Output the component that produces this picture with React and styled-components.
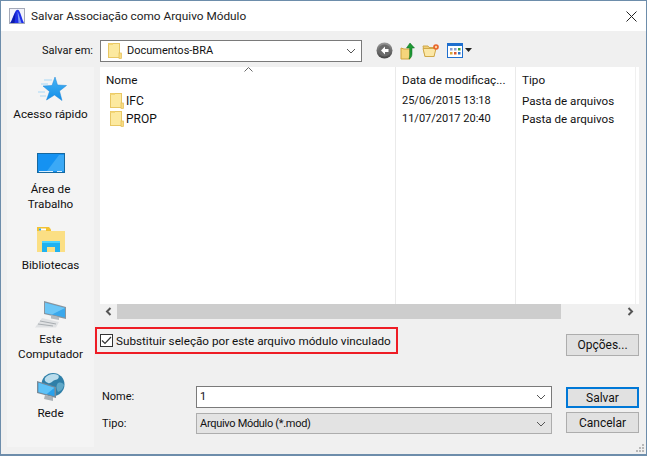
import styled, { createGlobalStyle } from 'styled-components';

const Global = createGlobalStyle`
  html, body { margin: 0; padding: 0; background: #f0f0f0; }
  body {
    font-family: Roboto, 'Noto Sans', sans-serif;
    font-size: 12px;
    color: #111;
  }
  * { box-sizing: border-box; }
`;

const Dialog = styled.div`
  width: 647px;
  height: 456px;
  display: flex;
  flex-direction: column;
  border: 1px solid #6d8dab;
  border-bottom-width: 2px;
  background: #f0f0f0;
  position: relative;
`;

const TitleBar = styled.div`
  height: 30px;
  flex: none;
  background: #fff;
  display: flex;
  align-items: center;
  gap: 6px;
  padding: 0 8px;
  font-size: 11.8px;
  color: #222;
`;

const CloseButton = styled.div`
  margin-left: auto;
  margin-right: 1px;
  display: flex;
`;

const TopRow = styled.div`
  height: 36px;
  flex: none;
  display: flex;
  align-items: center;
  padding-top: 3px;
`;

const SaveLabel = styled.div`
  width: 92px;
  text-align: right;
  margin-right: 7px;
  padding-bottom: 1px;
  font-size: 11px;
`;

const Combo = styled.div`
  height: ${(p) => p.$h || 22}px;
  width: ${(p) => p.$w}px;
  display: flex;
  align-items: center;
  border: 1px solid ${(p) => (p.$muted ? '#adadad' : '#7a7a7a')};
  background: ${(p) => (p.$muted ? '#e3e3e3' : '#fff')};
  padding-left: ${(p) => p.$pad || 2}px;
  padding-right: 5px;
  gap: 5px;
`;

const ComboText = styled.span`
  flex: 1;
  padding-left: ${(p) => p.$pad || 0}px;
  font-size: 11px;
  letter-spacing: ${(p) => p.$tight || 0}px;
`;

const Toolbar = styled.div`
  display: flex;
  align-items: center;
  margin-left: 14px;
  gap: 7px;
`;

const Middle = styled.div`
  flex: 1;
  display: flex;
  padding-left: 6px;
  min-height: 0;
`;

const Sidebar = styled.div`
  width: 87px;
  flex: none;
  background: #f4f4f4;
  display: flex;
  flex-direction: column;
  align-items: center;
  margin-bottom: 7px;
`;

const Place = styled.div`
  width: 87px;
  height: ${(p) => p.$h}px;
  display: flex;
  flex-direction: column;
  align-items: center;
  text-align: center;
  line-height: 15px;
  font-size: 11.7px;
`;

const PlaceIcon = styled.div`
  height: ${(p) => p.$h}px;
  display: flex;
  align-items: flex-end;
  justify-content: center;
  margin-bottom: ${(p) => p.$gap}px;
`;

const Main = styled.div`
  flex: 1;
  display: flex;
  flex-direction: column;
  padding-left: 6px;
`;

const FileList = styled.div`
  height: 237px;
  width: 539px;
  flex: none;
  background: #fff;
  position: relative;
`;

const Columns = styled.div`
  display: grid;
  grid-template-columns: 296px 120px 120px;
  height: 100%;
`;

const Column = styled.div`
  border-right: 1px solid ${(p) => (p.$last ? '#f0f0f0' : '#eaeaea')};
  padding: 5px 0 0 ${(p) => p.$pad}px;
  display: flex;
  flex-direction: column;
`;

const HeaderCell = styled.div`
  height: 17px;
  line-height: 17px;
  margin-bottom: 3px;
  white-space: nowrap;
  font-size: 11.7px;
`;

const Cell = styled.div`
  height: 18px;
  line-height: 18px;
  display: flex;
  align-items: center;
  gap: 2px;
  padding-left: ${(p) => p.$indent || 0}px;
  white-space: nowrap;
  font-size: ${(p) => p.$size || 12}px;
`;

const SortCaret = styled.svg`
  position: absolute;
  left: 144px;
  top: 0;
`;

const ScrollBar = styled.div`
  height: 15px;
  width: 539px;
  flex: none;
  display: flex;
  align-items: center;
`;

const ScrollArrow = styled.div`
  width: 17px;
  height: 15px;
  flex: none;
  display: flex;
  align-items: center;
  justify-content: center;
`;

const ScrollThumb = styled.div`
  width: 444px;
  height: 15px;
  flex: none;
  background: #cdcdcd;
`;

const ScrollRest = styled.div`
  flex: 1;
`;

const OptionsRow = styled.div`
  display: flex;
  justify-content: space-between;
  width: 539px;
  height: 64px;
  flex: none;
  align-items: flex-start;
  padding-top: 8px;
`;

const Highlight = styled.label`
  display: flex;
  align-items: center;
  gap: 3px;
  margin-left: -5px;
  width: 303px;
  height: 27px;
  border: 2px solid #ee1c25;
  padding-left: 3px;
  font-size: 11.7px;
  white-space: nowrap;
`;

const CheckBox = styled.span`
  width: 13px;
  height: 13px;
  flex: none;
  border: 1px solid #333;
  background: #fff;
  display: flex;
  align-items: center;
  justify-content: center;
`;

const Button = styled.div`
  width: 73px;
  height: ${(p) => p.$h || 22}px;
  display: flex;
  align-items: center;
  justify-content: center;
  background: #e1e1e1;
  border: ${(p) => (p.$primary ? '2px solid #0078d7' : '1px solid #adadad')};
  margin-top: ${(p) => p.$mt || 0}px;
  margin-bottom: ${(p) => p.$mb || 0}px;
`;

const FormGrid = styled.div`
  display: grid;
  grid-template-columns: 96px 356px 14px 73px;
  grid-auto-rows: 27px;
  align-items: center;
  width: 539px;
`;

const FormSpacer = styled.div``;

const FormLabel = styled.div`
  padding-left: 2px;
  font-size: 11px;
`;

const Grip = styled.svg`
  position: absolute;
  right: 1px;
  bottom: 1px;
`;

const Chevron = () => (
  <svg width="10" height="6" viewBox="0 0 10 6" fill="none">
    <path d="M1 1l4 4 4-4" stroke="#555" strokeWidth="1" />
  </svg>
);

const Folder = () => (
  <svg width="14" height="16" viewBox="0 0 14 16">
    <rect x="0.5" y="0.5" width="11" height="14" fill="#fce99f" stroke="#e8c764" />
    <rect x="0.5" y="0.5" width="4.5" height="1.5" fill="#f3d675" />
    <rect x="11" y="10" width="2.5" height="5.5" fill="#f8dc83" stroke="#e3bd55" strokeWidth="0.7" />
  </svg>
);

const AppIcon = () => (
  <svg width="16" height="16" viewBox="0 0 16 16">
    <rect x="0.5" y="0.5" width="15" height="15" fill="#f2f3fb" stroke="#a5aab8" />
    <path d="M1 15C3 13 4.500 6 7 2.500c1-1 2.500-1 3 0 2 3 3 9 5 12.500z" fill="#1f2fe8" />
    <path d="M1.500 15C3.500 12 5 7 6.500 4c-.3 4-.5 8-1 11z" fill="#0d1aa8" />
    <path d="M8.500 3.500c1.500 3 2.500 7.500 4 11.500H9.500z" fill="#7f9bf7" />
  </svg>
);

const BackIcon = () => (
  <svg width="17" height="17" viewBox="0 0 17 17">
    <defs>
      <linearGradient id="backG" x1="0" y1="0" x2="0" y2="1">
        <stop offset="0" stopColor="#9a9a9a" />
        <stop offset="1" stopColor="#444" />
      </linearGradient>
    </defs>
    <circle cx="8.5" cy="8.5" r="8" fill="url(#backG)" />
    <circle cx="8.5" cy="8.5" r="6" fill="#6a6a6a" />
    <path d="M9 4.5L5 8.5l4 4V10h3.5V7H9z" fill="#fff" />
  </svg>
);

const UpIcon = () => (
  <svg width="15" height="18" viewBox="0 0 15 18">
    <path d="M1 6l3 1 6 0v10l-9 0z" fill="#f5d57b" stroke="#cfa43f" />
    <path d="M10 1l4.5 5H12v6c0 2-1 4-3 5 .6-2 .7-4 .7-5V6H6.5z" fill="#1e9a35" stroke="#0f6a20" strokeWidth="0.5" />
  </svg>
);

const NewFolderIcon = () => (
  <svg width="18" height="15" viewBox="0 0 18 15">
    <path d="M1 3h5l1 1.5h5v9H3z" fill="#f0cf78" stroke="#d0a94a" />
    <path d="M1 5.5h10l3 0-2 8H3z" fill="#fbe7a6" stroke="#d0a94a" />
    <circle cx="14" cy="4" r="2.8" fill="#e8632a" />
    <circle cx="14" cy="4" r="1.2" fill="#fbd2a0" />
  </svg>
);

const ViewsIcon = () => (
  <svg width="25" height="15" viewBox="0 0 25 15">
    <rect x="0.5" y="0.5" width="15" height="14" fill="#fff" stroke="#1f6fce" />
    <rect x="0.5" y="0.5" width="15" height="2.5" fill="#1f6fce" />
    <rect x="3" y="5" width="2.5" height="2.5" fill="#8b9fd0" />
    <rect x="7" y="5" width="2.5" height="2.5" fill="#8b9fd0" />
    <rect x="11" y="5" width="2.5" height="2.5" fill="#3c9c3f" />
    <rect x="3" y="9" width="2.5" height="2.5" fill="#d9a43a" />
    <rect x="7" y="9" width="2.5" height="2.5" fill="#d8572f" />
    <rect x="11" y="9" width="2.5" height="2.5" fill="#2f6fc4" />
    <path d="M18 5h7l-3.5 4z" fill="#222" />
  </svg>
);

const StarIcon = () => (
  <svg width="32" height="28" viewBox="0 0 32 28">
    <defs>
      <linearGradient id="starG" x1="0" y1="0" x2="0" y2="1">
        <stop offset="0" stopColor="#48b4f5" />
        <stop offset="1" stopColor="#128ee8" />
      </linearGradient>
    </defs>
    <path d="M9 4h8M6 8h7M3 16h7M5 20h6" stroke="#a8d8f6" strokeWidth="1" />
    <path d="M20 1l2.5 8 9 .5-7 5.5 2.5 9.500-7.500-5.500-8 5 3-8.500L8 10l9-.5z" fill="url(#starG)" stroke="#1a85d8" strokeWidth="0.5" />
  </svg>
);

const DesktopIcon = () => (
  <svg width="28" height="20" viewBox="0 0 28 20">
    <rect x="0.5" y="0.5" width="27" height="19" fill="#1592f2" stroke="#16689f" />
    <path d="M10 18L22 2h5v16z" fill="#3ba9f6" />
    <path d="M2 18.5h14M20 18.5h5" stroke="#d8efff" strokeWidth="1" />
  </svg>
);

const LibraryIcon = () => (
  <svg width="28" height="25" viewBox="0 0 28 25">
    <path d="M0 0h12l2 2.5v4H0z" fill="#f2c233" />
    <rect x="2" y="1.5" width="7" height="2" fill="#fff" />
    <rect x="2" y="1.5" width="2" height="2" fill="#35a8ef" />
    <rect x="0" y="4" width="28" height="21" fill="#fbdf84" />
    <path d="M5 25V14h18v11h-5v-5h-8v5z" fill="#20b2f0" />
    <path d="M5 14h18v2H5z" fill="#4bd2ff" />
  </svg>
);

const ComputerIcon = () => (
  <svg width="32" height="28" viewBox="0 0 32 28">
    <path d="M9 1l22 6v12l-22-5z" fill="#8a959e" />
    <path d="M10 2.800l20 5.200V17.500l-20-4.600z" fill="#3aa8ec" />
    <path d="M10 2.800l20 5.200-13 6.500-7-1.600z" fill="#6cc6f6" />
    <path d="M16 15l8 2v3l-8-1.500z" fill="#b4babf" />
    <path d="M7 18l17 4-3 5.500H0z" fill="#dfe1e3" />
    <path d="M5 21l16 3M3 24l15 2" stroke="#a8adb1" strokeWidth="1" />
  </svg>
);

const NetworkIcon = () => (
  <svg width="28" height="28" viewBox="0 0 28 28">
    <circle cx="16" cy="11.5" r="11.5" fill="#2f7fa8" />
    <path d="M8 5c3-4 9-5 13-3 2 2 0 5-3 5-3 1-4 4-7 3-2-1-4-2-3-5z" fill="#b9dcec" />
    <path d="M21 10c3-1 5 0 6 2-1 4-3 6-6 7-2-3-2-7 0-9z" fill="#5fa8c8" />
    <path d="M0 8l19 6v11l-19-5z" fill="#7b8a96" />
    <path d="M1.500 9.800l16 5v8.400l-16-4.200z" fill="#29a1ec" />
    <path d="M1.500 9.800l16 5-8 6.500-8-2.300z" fill="#5ec2f7" />
    <path d="M8 22l8 2v4l-9-2z" fill="#aab1b6" />
  </svg>
);

const places = [
  { label: ['Acesso rápido'], icon: <StarIcon />, height: 76, iconH: 37, gap: 3 },
  { label: ['Área de', 'Trabalho'], icon: <DesktopIcon />, height: 82, iconH: 30, gap: 9 },
  { label: ['Bibliotecas'], icon: <LibraryIcon />, height: 73, iconH: 27, gap: 6 },
  { label: ['Este', 'Computador'], icon: <ComputerIcon />, height: 73, iconH: 30, gap: 4 },
  { label: ['Rede'], icon: <NetworkIcon />, height: 50, iconH: 34, gap: 5 },
];

const files = [
  { name: 'IFC', date: '25/06/2015 13:18', type: 'Pasta de arquivos' },
  { name: 'PROP', date: '11/07/2017 20:40', type: 'Pasta de arquivos' },
];

export default function App() {
  return (
    <>
      <Global />
      <Dialog>
        <TitleBar>
          <AppIcon />
          <span>Salvar Associação como Arquivo Módulo</span>
          <CloseButton>
            <svg width="11" height="11" viewBox="0 0 11 11">
              <path d="M0.5 0.5l10 10M10.5 0.5l-10 10" stroke="#222" strokeWidth="1" />
            </svg>
          </CloseButton>
        </TitleBar>
        <TopRow>
          <SaveLabel>Salvar em:</SaveLabel>
          <Combo $w={262} $pad={7}>
            <Folder />
            <ComboText>Documentos-BRA</ComboText>
            <Chevron />
          </Combo>
          <Toolbar>
            <BackIcon />
            <UpIcon />
            <NewFolderIcon />
            <ViewsIcon />
          </Toolbar>
        </TopRow>
        <Middle>
          <Sidebar>
            {places.map((place) => (
              <Place key={place.label[0]} $h={place.height}>
                <PlaceIcon $h={place.iconH} $gap={place.gap}>{place.icon}</PlaceIcon>
                {place.label.map((line) => (
                  <div key={line}>{line}</div>
                ))}
              </Place>
            ))}
          </Sidebar>
          <Main>
            <FileList>
              <SortCaret width="9" height="5" viewBox="0 0 9 5" fill="none">
                <path d="M0.5 4.5l4-4 4 4" stroke="#666" />
              </SortCaret>
              <Columns>
                <Column $pad={6}>
                  <HeaderCell>Nome</HeaderCell>
                  {files.map((file) => (
                    <Cell key={file.name} $indent={4}>
                      <Folder />
                      {file.name}
                    </Cell>
                  ))}
                </Column>
                <Column $pad={6}>
                  <HeaderCell>Data de modificaç...</HeaderCell>
                  {files.map((file) => (
                    <Cell key={file.name} $size={11}>{file.date}</Cell>
                  ))}
                </Column>
                <Column $pad={6} $last>
                  <HeaderCell>Tipo</HeaderCell>
                  {files.map((file) => (
                    <Cell key={file.name} $size={11.6}>{file.type}</Cell>
                  ))}
                </Column>
              </Columns>
            </FileList>
            <ScrollBar>
              <ScrollArrow>
                <svg width="7" height="9" viewBox="0 0 7 9" fill="none">
                  <path d="M5.5 1L2 4.5 5.5 8" stroke="#555" strokeWidth="2" />
                </svg>
              </ScrollArrow>
              <ScrollThumb />
              <ScrollRest />
              <ScrollArrow>
                <svg width="7" height="9" viewBox="0 0 7 9" fill="none">
                  <path d="M1.5 1L5 4.5 1.5 8" stroke="#555" strokeWidth="2" />
                </svg>
              </ScrollArrow>
            </ScrollBar>
            <OptionsRow>
              <Highlight>
                <CheckBox>
                  <svg width="11" height="9" viewBox="0 0 11 9" fill="none">
                    <path d="M1 4.5L4 7.5 10 1" stroke="#333" strokeWidth="1.2" />
                  </svg>
                </CheckBox>
                Substituir seleção por este arquivo módulo vinculado
              </Highlight>
              <Button $mt={7}>Opções...</Button>
            </OptionsRow>
            <FormGrid>
              <FormLabel>Nome:</FormLabel>
              <Combo $w={356}>
                <ComboText $pad={1}>1</ComboText>
                <Chevron />
              </Combo>
              <FormSpacer />
              <Button $primary $h={21} $mt={2}>Salvar</Button>
              <FormLabel>Tipo:</FormLabel>
              <Combo $w={356} $h={21} $muted>
                <ComboText $pad={1} $tight={-0.3}>Arquivo Módulo (*.mod)</ComboText>
                <Chevron />
              </Combo>
              <FormSpacer />
              <Button $h={21} $mb={2}>Cancelar</Button>
            </FormGrid>
          </Main>
        </Middle>
        <Grip width="10" height="10" viewBox="0 0 10 10">
          <path d="M7 1h2v2H7zM4 4h2v2H4zM7 4h2v2H7zM1 7h2v2H1zM4 7h2v2H4zM7 7h2v2H7z" fill="#b8b8b8" />
        </Grip>
      </Dialog>
    </>
  );
}
